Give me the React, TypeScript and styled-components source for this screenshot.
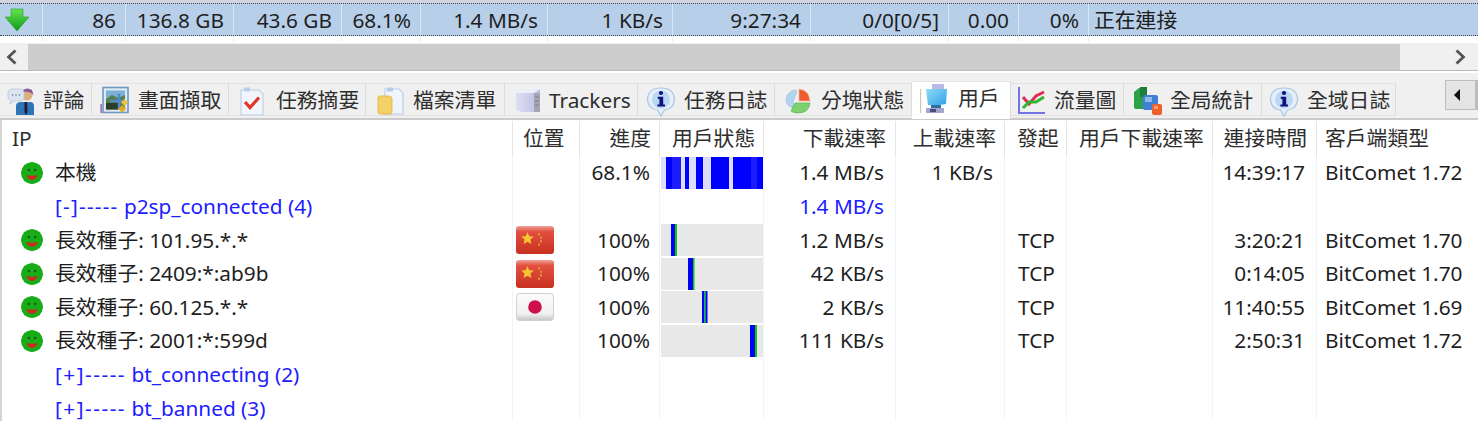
import React from 'react';
import styled, { createGlobalStyle } from 'styled-components';

const GlobalStyle = createGlobalStyle`
  html, body {
    margin: 0;
    padding: 0;
    background: #fff;
  }
  body {
    font-family: 'Noto Sans', 'Noto Sans CJK TC', sans-serif;
    font-size: 20.8px;
    color: #1e1e1e;
  }
`;

const Root = styled.div`
  width: 1478px;
  height: 421px;
  overflow: hidden;
  display: flex;
  flex-direction: column;
  background: #fff;
`;

/* selected task row */
const TaskStrip = styled.div`
  height: 43px;
  flex: none;
  box-sizing: border-box;
  padding-top: 3px;
  background: linear-gradient(#d3d6e0 0 3px, #fff 3px);
`;

const TaskRow = styled.div`
  height: 33px;
  box-sizing: border-box;
  display: grid;
  grid-template-columns: 43px 83px 108px 108px 79px 127px 125px 138px 138px 70px 70px 1fr;
  background: #b8cfe9;
  border-top: 1px dotted #3c4450;
  border-bottom: 1px dotted #3c4450;
`;

const TaskCell = styled.div<{ $left?: boolean }>`
  display: flex;
  align-items: center;
  justify-content: ${(p) => (p.$left ? 'flex-start' : 'flex-end')};
  padding: 2px 9px 0 5px;
  border-right: 1px solid #dbe6f3;
  white-space: nowrap;
  line-height: 1;
  &:last-child {
    border-right: 0;
  }
`;

const ArrowCell = styled.div`
  display: flex;
  align-items: center;
  padding-left: 4px;
  border-right: 1px solid #dbe6f3;
`;

const TaskStubs = styled.div`
  height: 6px;
  display: grid;
  grid-template-columns: 43px 83px 108px 108px 79px 127px 125px 138px 138px 70px 70px 1fr;
`;

const TaskStub = styled.div`
  border-right: 1px solid #eeeeee;
`;

/* horizontal scroll bar */
const ScrollBar = styled.div`
  height: 28px;
  flex: none;
  display: flex;
  background: #f0f0f0;
  border-bottom: 1px solid #b9b9b9;
  box-sizing: border-box;
`;

const ScrollArrow = styled.div`
  width: 28px;
  flex: none;
  display: flex;
  align-items: center;
  padding-left: 5px;
  box-sizing: border-box;
`;

const ScrollGutter = styled.div`
  flex: 1;
  background: #f0f0f0;
  padding: 1px 0 0;
  display: flex;
`;

const ScrollThumb = styled.div`
  width: 1372px;
  height: 26px;
  background: #cdcdcd;
`;

const ScrollEnd = styled.div`
  width: 78px;
  flex: none;
  display: flex;
  align-items: center;
  justify-content: flex-end;
  padding-right: 11px;
  box-sizing: border-box;
`;

/* tabs */
const TabBar = styled.div`
  height: 49px;
  flex: none;
  box-sizing: border-box;
  display: flex;
  align-items: flex-start;
  padding-top: 12px;
  background: linear-gradient(#fff 0 2px, #f0f0f0 2px);
  border-bottom: 2px solid #cbcbcb;
  position: relative;
`;

const Tab = styled.div<{ $width: number; $inset: number; $active?: boolean }>`
  width: ${(p) => p.$width}px;
  flex: none;
  box-sizing: border-box;
  height: ${(p) => (p.$active ? 38 : 33)}px;
  margin-top: ${(p) => (p.$active ? -2 : 0)}px;
  display: flex;
  align-items: center;
  padding: ${(p) => (p.$active ? `0 0 5px ${p.$inset}px` : `2px 0 0 ${p.$inset}px`)};
  gap: 9px;
  background: ${(p) => (p.$active ? '#fff' : '#f0f0f0')};
  border-top: 1px solid #e2e2e2;
  border-right: 1px solid #dcdcdc;
  border-bottom: ${(p) => (p.$active ? '0' : '1px solid #e2e2e2')};
  position: relative;
  z-index: ${(p) => (p.$active ? 1 : 0)};
  white-space: nowrap;
  line-height: 1;
  color: #2e2e2e;
`;

const TabIconBox = styled.div`
  width: 28px;
  height: 28px;
  flex: none;
  margin-left: -1px;
`;

const TabScroller = styled.div`
  position: absolute;
  right: 0;
  top: 9px;
  width: 33px;
  height: 30px;
  box-sizing: border-box;
  background: #e4e4e4;
  border: 1px solid #bdbdbd;
  border-right-width: 3px;
  display: flex;
  align-items: center;
  justify-content: center;
  padding-right: 6px;
`;

/* peers table */
const Table = styled.div`
  flex: 1;
  min-height: 0;
  border-left: 2px solid #d4d4d4;
  padding-top: 1px;
  overflow: hidden;
`;

const GridRow = styled.div<{ $height: number }>`
  display: grid;
  grid-template-columns: 511px 67px 80px 104px 132px 109px 62px 146px 104px 1fr;
  height: ${(p) => p.$height}px;
`;

const alignMap = { left: 'flex-start', right: 'flex-end' };

const HeaderCell = styled.div<{ $align: 'left' | 'right'; $pad: number }>`
  display: flex;
  align-items: center;
  justify-content: ${(p) => alignMap[p.$align]};
  padding: ${(p) => (p.$align === 'right' ? `0 ${p.$pad}px 0 0` : `0 0 0 ${p.$pad}px`)};
  border-right: 1px solid #e6e6e6;
  white-space: nowrap;
  line-height: 1;
  color: #2e2e2e;
  &:last-child {
    border-right: 0;
  }
`;

const Cell = styled.div<{ $align: 'left' | 'right'; $pad: number; $link?: boolean }>`
  display: flex;
  align-items: center;
  justify-content: ${(p) => alignMap[p.$align]};
  padding: ${(p) => (p.$align === 'right' ? `0 ${p.$pad}px 0 0` : `0 0 0 ${p.$pad}px`)};
  border-right: 1px solid #eef5fd;
  white-space: nowrap;
  line-height: 1;
  color: ${(p) => (p.$link ? '#2020ff' : '#1e1e1e')};
  &:last-child {
    border-right: 0;
  }
`;

const PeerName = styled.div<{ $link?: boolean }>`
  display: flex;
  align-items: center;
  gap: 11px;
  padding-left: ${(p) => (p.$link ? 53 : 18)}px;
  white-space: pre;
  line-height: 1;
  color: ${(p) => (p.$link ? '#2020ff' : '#1e1e1e')};
  border-right: 1px solid #eef5fd;
`;

const GroupLabel = styled.span``;

const GroupDashes = styled.span<{ $spacing: number }>`
  letter-spacing: ${(p) => p.$spacing}px;
`;

const BarCell = styled.div`
  display: flex;
  align-items: center;
  border-right: 1px solid #eef5fd;
  padding-left: 1px;
`;

const FlagCell = styled.div`
  display: flex;
  align-items: center;
  padding-left: 3px;
  border-right: 1px solid #eef5fd;
`;

const ChevronLeft = () => (
  <svg width="13" height="16" viewBox="0 0 13 16">
    <path d="M10.5 1.5 L3.5 8 L10.5 14.5" fill="none" stroke="#555" strokeWidth="2.8" />
  </svg>
);

const ChevronRight = () => (
  <svg width="13" height="16" viewBox="0 0 13 16">
    <path d="M2.5 1.5 L9.5 8 L2.5 14.5" fill="none" stroke="#555" strokeWidth="2.8" />
  </svg>
);

const DownArrow = () => (
  <svg width="26" height="24" viewBox="0 0 26 24">
    <defs>
      <linearGradient id="arrowFill" x1="0" y1="0" x2="0" y2="1">
        <stop offset="0" stopColor="#62e44c" />
        <stop offset="1" stopColor="#0f9a1c" />
      </linearGradient>
    </defs>
    <path d="M7 1 H19 V9 H25 L13 23 L1 9 H7 Z" fill="url(#arrowFill)" stroke="#2b9a2b" strokeWidth="0.6" />
  </svg>
);

const Smiley = () => (
  <svg width="24" height="24" viewBox="0 0 24 24" style={{ flex: 'none' }}>
    <g fill="#18ad18">
      <circle cx="12" cy="12" r="10.8" />
      <circle cx="12" cy="1.8" r="1" />
      <circle cx="12" cy="22.2" r="1" />
      <circle cx="1.8" cy="12" r="1" />
      <circle cx="22.2" cy="12" r="1" />
      <circle cx="4.8" cy="4.8" r="1" />
      <circle cx="19.2" cy="4.8" r="1" />
      <circle cx="4.8" cy="19.2" r="1" />
      <circle cx="19.2" cy="19.2" r="1" />
    </g>
    <circle cx="8.8" cy="9" r="1.2" fill="#0f5c0f" />
    <circle cx="15.2" cy="9" r="1.2" fill="#0f5c0f" />
    <path d="M6.5 14 Q12 15.5 17.5 14 Q16.5 18.8 12 18.8 Q7.5 18.8 6.5 14 Z" fill="#cf2a1e" />
  </svg>
);

const CnFlag = () => (
  <svg width="38" height="28" viewBox="0 0 38 28">
    <defs>
      <linearGradient id="cnFill" x1="0" y1="0" x2="0" y2="1">
        <stop offset="0" stopColor="#f0a298" />
        <stop offset="0.2" stopColor="#e25040" />
        <stop offset="1" stopColor="#c8301f" />
      </linearGradient>
    </defs>
    <rect x="0" y="0" width="38" height="28" rx="3" fill="url(#cnFill)" />
    <path d="M11.5 6 L13.3 10.2 L17.8 10.6 L14.4 13.6 L15.4 18 L11.5 15.7 L7.6 18 L8.6 13.6 L5.2 10.6 L9.7 10.2 Z" fill="#f7c531" />
    <rect x="22" y="7" width="2" height="2.4" fill="#e08a3e" />
    <rect x="24" y="10.5" width="2" height="2.4" fill="#e08a3e" />
    <rect x="24" y="14" width="2" height="2.4" fill="#e08a3e" />
    <rect x="22" y="17.5" width="2" height="2.4" fill="#e08a3e" />
  </svg>
);

const JpFlag = () => (
  <svg width="38" height="28" viewBox="0 0 38 28">
    <defs>
      <linearGradient id="jpFill" x1="0" y1="0" x2="0" y2="1">
        <stop offset="0" stopColor="#fbfbfb" />
        <stop offset="0.75" stopColor="#f1f1f1" />
        <stop offset="1" stopColor="#c4c4c4" />
      </linearGradient>
    </defs>
    <rect x="0.5" y="0.5" width="37" height="27" rx="3" fill="url(#jpFill)" stroke="#d0d0d0" />
    <circle cx="19" cy="14" r="6.8" fill="#d0104c" />
  </svg>
);

const TabIcons: Record<string, React.ReactNode> = {
  review: (
    <svg width="28" height="29" viewBox="0 0 28 29" style={{ overflow: 'visible' }}>
      <circle cx="21" cy="8" r="5.5" fill="#dcae7e" />
      <path d="M17 3 Q21 0 26 3 L27.5 8 L25 6 Q21 4 17 5 Z" fill="#8d5a96" />
      <path d="M10 28 V19 Q10 15 15 15 H24 Q28 15 28 19 V28 Z" fill="#2f73b8" />
      <path d="M18.5 15 L21 15 L21.5 25 L20 28 L18.5 25 Z" fill="#1c1c2c" />
      <path d="M2 6 Q2 2 7 2 H13 Q18 2 18 6 V10 Q18 14 13 14 H8 L4 17 L5 13.5 Q2 12.5 2 10 Z" fill="#dbe5f1" stroke="#bac8da" strokeWidth="0.8" />
      <circle cx="6.5" cy="8" r="0.9" fill="#8a9db5" />
      <circle cx="10" cy="8" r="0.9" fill="#8a9db5" />
      <circle cx="13.5" cy="8" r="0.9" fill="#8a9db5" />
    </svg>
  ),
  capture: (
    <svg width="28" height="28" viewBox="0 0 28 28" style={{ overflow: 'visible' }}>
      <rect x="2" y="0.5" width="25" height="25" fill="#dfe9f4" stroke="#6e97c2" strokeWidth="1.6" />
      <rect x="5" y="3.5" width="19" height="9" fill="#7db0d6" />
      <path d="M5 12 L11 8 L17 11 L24 8 V22.5 H5 Z" fill="#567f4c" />
      <rect x="5" y="16" width="12" height="6.5" fill="#2c3d2a" />
      <path d="M9 14 H24 M18 7 V22" stroke="#4f8ad0" strokeWidth="2.4" />
      <rect x="21" y="13" width="5" height="5" fill="#f0c230" transform="rotate(45 23.5 15.5)" />
      <rect x="18.5" y="19" width="5.5" height="5.5" fill="#e3a91c" transform="rotate(45 21.2 21.7)" />
      <rect x="-0.5" y="17" width="1.2" height="9" fill="#8a3fa0" />
    </svg>
  ),
  summary: (
    <svg width="28" height="30" viewBox="0 0 28 30" style={{ overflow: 'visible' }}>
      <path d="M2 3 H20 L24 7 V28 H2 Z" fill="#f2f6fb" stroke="#c9d9ec" strokeWidth="1.6" />
      <rect x="5" y="0.5" width="6" height="4" fill="#b7cdea" />
      <path d="M6 15 L11 20.5 L20 10.5" fill="none" stroke="#e0352a" strokeWidth="3.2" />
    </svg>
  ),
  files: (
    <svg width="28" height="29" viewBox="0 0 28 29" style={{ overflow: 'visible' }}>
      <path d="M9 2 H23 L27 6 V27 H9 Z" fill="#f0f5fb" stroke="#c9d9ec" strokeWidth="1.6" />
      <rect x="11" y="0.5" width="6" height="4" fill="#b7cdea" />
      <path d="M2 11 Q2 9 4 9 H13 Q16 9 16 12 V25 Q16 27 14 27 H5 Q2 27 2 25 Z" fill="#f4d167" stroke="#e0b13c" strokeWidth="0.8" />
    </svg>
  ),
  trackers: (
    <svg width="28" height="28" viewBox="0 0 28 28">
      <defs>
        <linearGradient id="serverFront" x1="0" y1="0" x2="1" y2="0">
          <stop offset="0" stopColor="#dedef3" />
          <stop offset="1" stopColor="#bcbde0" />
        </linearGradient>
      </defs>
      <path d="M4 6 L10 2 H28 V25 H10 L4 23 Z" fill="url(#serverFront)" />
      <path d="M4 6 L10 2 H28 L22 6 Z" fill="#eeeef9" />
      <rect x="22" y="6" width="6" height="19" fill="#a3a4b4" />
      <path d="M23 10 H27 M23 14 H27 M23 18 H27" stroke="#7f8092" strokeWidth="1" />
    </svg>
  ),
  info: (
    <svg width="28" height="30" viewBox="0 0 28 30" style={{ overflow: 'visible' }}>
      <path d="M14 1 Q27 1 27.5 12.5 Q27 22 17.5 23 L14 29 L10.5 23 Q1 22 0.5 12.5 Q1 1 14 1 Z" fill="#e6eff9" stroke="#a9c6e4" strokeWidth="1.2" />
      <ellipse cx="14" cy="12.5" rx="9" ry="9" fill="#b9d8f4" />
      <circle cx="14" cy="6" r="2.1" fill="#12127f" />
      <path d="M10.8 9.8 H16.2 V17.4 H18 V19.6 H10.4 V17.4 H12.4 V12 H10.8 Z" fill="#12127f" />
    </svg>
  ),
  blocks: (
    <svg width="28" height="28" viewBox="0 0 28 28">
      <path d="M10 3 L13 4 L9 15 L11 21 Q2 20 2 12 Q3 6 10 3 Z" fill="#b3d4ee" stroke="#8ab6da" strokeWidth="0.6" />
      <path d="M15 2 Q25 3 26 14 H15 Z" fill="#ee5b2f" stroke="#f3b49c" strokeWidth="0.8" />
      <path d="M11 16 H26 Q25 26 14 26 Q9 26 7 24 Z" fill="#7fd06e" stroke="#4fae45" strokeWidth="0.6" />
    </svg>
  ),
  users: (
    <svg width="28" height="30" viewBox="0 0 28 30" style={{ overflow: 'visible' }}>
      <defs>
        <linearGradient id="screenFill" x1="0" y1="0" x2="1" y2="1">
          <stop offset="0" stopColor="#8fdcf8" />
          <stop offset="1" stopColor="#2f9fe6" />
        </linearGradient>
      </defs>
      <rect x="-1" y="5" width="1.2" height="24" fill="#d3c6b6" />
      <path d="M11 0 H23 V5 H11 Z" fill="#b9b9e4" />
      <path d="M5 5 H26 L25 20 Q15 22 7 21 Z" fill="url(#screenFill)" />
      <rect x="10" y="21" width="10" height="4" fill="#2d6f9e" />
      <rect x="5" y="24" width="18" height="5" rx="1" fill="#a3a3cc" />
      <rect x="9" y="25" width="6" height="3" fill="#4c4c7a" />
    </svg>
  ),
  chart: (
    <svg width="28" height="28" viewBox="0 0 28 28">
      <path d="M2 0 V26 H28" fill="none" stroke="#7373e4" strokeWidth="2" />
      <path d="M6 10 L12 17 L19 9 L27 5" fill="none" stroke="#e32b55" strokeWidth="3" />
      <path d="M6 21 L12 15 L19 15 L27 10" fill="none" stroke="#2fb52f" strokeWidth="3" />
    </svg>
  ),
  stats: (
    <svg width="28" height="29" viewBox="0 0 28 29" style={{ overflow: 'visible' }}>
      <path d="M1 5 L6 1 H13 V22 H3 Q1 22 1 20 Z" fill="#2ca04a" />
      <rect x="7" y="0" width="7" height="10" fill="#1f7d3a" />
      <rect x="10" y="8" width="15" height="15" rx="2" fill="#3f7fd4" />
      <rect x="12" y="10" width="7" height="5" fill="#8fbaf0" />
      <rect x="19" y="17" width="10" height="11" rx="2" fill="#f0602a" />
      <rect x="21" y="19" width="4" height="3" fill="#ffa070" />
    </svg>
  ),
};

const Bar = ({ bg, marks }: { bg: string; marks: [number, number, string][] }) => (
  <svg width="102" height="32" viewBox="0 0 102 32" style={{ display: 'block' }}>
    <rect width="102" height="32" fill={bg} />
    {marks.map(([x, w, c]) => (
      <rect key={x} x={x} y="0" width={w} height="32" fill={c} />
    ))}
  </svg>
);

const BLUE = '#0000ff';
const SOFT = '#1c1cff';
const GREEN = '#00d000';

const taskCells = ['86', '136.8 GB', '43.6 GB', '68.1%', '1.4 MB/s', '1 KB/s', '9:27:34', '0/0[0/5]', '0.00', '0%'];

const tabs = [
  { label: '評論', icon: 'review', width: 92, inset: 7 },
  { label: '畫面擷取', icon: 'capture', width: 137, inset: 10 },
  { label: '任務摘要', icon: 'summary', width: 137, inset: 11 },
  { label: '檔案清單', icon: 'files', width: 139, inset: 11 },
  { label: 'Trackers', icon: 'trackers', width: 133, inset: 8 },
  { label: '任務日誌', icon: 'info', width: 137, inset: 10 },
  { label: '分塊狀態', icon: 'blocks', width: 137, inset: 10 },
  { label: '用戶', icon: 'users', width: 99, inset: 10, active: true },
  { label: '流量圖', icon: 'chart', width: 113, inset: 7 },
  { label: '全局統計', icon: 'stats', width: 138, inset: 10 },
  { label: '全域日誌', icon: 'info', width: 134, inset: 9 },
];

type Align = 'left' | 'right';

const columns: { title: string; align: Align; pad: number }[] = [
  { title: 'IP', align: 'left', pad: 10 },
  { title: '位置', align: 'left', pad: 10 },
  { title: '進度', align: 'right', pad: 8 },
  { title: '用戶狀態', align: 'left', pad: 12 },
  { title: '下載速率', align: 'right', pad: 9 },
  { title: '上載速率', align: 'right', pad: 8 },
  { title: '發起', align: 'left', pad: 12 },
  { title: '用戶下載速率', align: 'left', pad: 12 },
  { title: '連接時間', align: 'right', pad: 9 },
  { title: '客戶端類型', align: 'left', pad: 8 },
];

type Peer = {
  name: string;
  group?: { dashes: string; spacing: number };
  flag?: 'cn' | 'jp';
  progress?: string;
  bar?: React.ReactNode;
  down?: string;
  up?: string;
  proto?: string;
  time?: string;
  client?: string;
};

const grayBar = (marks: [number, number, string][]) => <Bar bg="#e8e8e8" marks={marks} />;

const peers: Peer[] = [
  {
    name: '本機',
    progress: '68.1%',
    bar: (
      <Bar
        bg="#dcdcff"
        marks={[
          [5, 6, BLUE],
          [11, 9, SOFT],
          [24, 4, BLUE],
          [35, 7, BLUE],
          [50, 18, BLUE],
          [72, 18, BLUE],
          [90, 6, SOFT],
          [96, 6, BLUE],
        ]}
      />
    ),
    down: '1.4 MB/s',
    up: '1 KB/s',
    time: '14:39:17',
    client: 'BitComet 1.72',
  },
  { name: ' p2sp_connected (4)', group: { dashes: '[-]-----', spacing: 1.2 }, down: '1.4 MB/s' },
  {
    name: '長效種子: 101.95.*.*',
    flag: 'cn',
    progress: '100%',
    bar: grayBar([[10, 4, BLUE], [14, 2, GREEN]]),
    down: '1.2 MB/s',
    proto: 'TCP',
    time: '3:20:21',
    client: 'BitComet 1.70',
  },
  {
    name: '長效種子: 2409:*:ab9b',
    flag: 'cn',
    progress: '100%',
    bar: grayBar([[27, 5, BLUE], [32, 1.5, GREEN]]),
    down: '42 KB/s',
    proto: 'TCP',
    time: '0:14:05',
    client: 'BitComet 1.70',
  },
  {
    name: '長效種子: 60.125.*.*',
    flag: 'jp',
    progress: '100%',
    bar: grayBar([[41, 2, BLUE], [43, 1.5, GREEN], [44.5, 2, BLUE]]),
    down: '2 KB/s',
    proto: 'TCP',
    time: '11:40:55',
    client: 'BitComet 1.69',
  },
  {
    name: '長效種子: 2001:*:599d',
    progress: '100%',
    bar: grayBar([[89, 5, BLUE], [94, 2, GREEN]]),
    down: '111 KB/s',
    proto: 'TCP',
    time: '2:50:31',
    client: 'BitComet 1.72',
  },
  { name: ' bt_connecting (2)', group: { dashes: '[+]-----', spacing: 1.5 } },
  { name: ' bt_banned (3)', group: { dashes: '[+]-----', spacing: 1.5 } },
];

const App: React.FC = () => (
  <Root>
    <GlobalStyle />
    <TaskStrip>
      <TaskRow>
        <ArrowCell>
          <DownArrow />
        </ArrowCell>
        {taskCells.map((value, index) => (
          <TaskCell key={index}>{value}</TaskCell>
        ))}
        <TaskCell $left>正在連接</TaskCell>
      </TaskRow>
      <TaskStubs>
        {[...Array(11)].map((_, index) => (
          <TaskStub key={index} />
        ))}
      </TaskStubs>
    </TaskStrip>
    <ScrollBar>
      <ScrollArrow>
        <ChevronLeft />
      </ScrollArrow>
      <ScrollGutter>
        <ScrollThumb />
      </ScrollGutter>
      <ScrollEnd>
        <ChevronRight />
      </ScrollEnd>
    </ScrollBar>
    <TabBar>
      {tabs.map((tab) => (
        <Tab key={tab.label} $width={tab.width} $inset={tab.inset} $active={tab.active}>
          <TabIconBox>{TabIcons[tab.icon]}</TabIconBox>
          {tab.label}
        </Tab>
      ))}
      <TabScroller>
        <svg width="7" height="12" viewBox="0 0 7 12">
          <path d="M6 0 V12 L0 6 Z" fill="#111" />
        </svg>
      </TabScroller>
    </TabBar>
    <Table>
      <GridRow $height={35}>
        {columns.map((column) => (
          <HeaderCell key={column.title} $align={column.align} $pad={column.pad}>
            {column.title}
          </HeaderCell>
        ))}
      </GridRow>
      {peers.map((peer) => (
        <GridRow key={peer.name} $height={33.6}>
          <PeerName $link={!!peer.group}>
            {peer.group ? (
              <GroupLabel>
                <GroupDashes $spacing={peer.group.spacing}>{peer.group.dashes}</GroupDashes>
                {peer.name}
              </GroupLabel>
            ) : (
              <>
                <Smiley />
                {peer.name}
              </>
            )}
          </PeerName>
          <FlagCell>
            {peer.flag === 'cn' && <CnFlag />}
            {peer.flag === 'jp' && <JpFlag />}
          </FlagCell>
          <Cell $align="right" $pad={9}>
            {peer.progress}
          </Cell>
          <BarCell>{peer.bar}</BarCell>
          <Cell $align="right" $pad={11} $link={!!peer.group}>
            {peer.down}
          </Cell>
          <Cell $align="right" $pad={11}>
            {peer.up}
          </Cell>
          <Cell $align="left" $pad={13}>
            {peer.proto}
          </Cell>
          <Cell $align="left" $pad={0} />
          <Cell $align="right" $pad={11}>
            {peer.time}
          </Cell>
          <Cell $align="left" $pad={8}>
            {peer.client}
          </Cell>
        </GridRow>
      ))}
    </Table>
  </Root>
);

export default App;
